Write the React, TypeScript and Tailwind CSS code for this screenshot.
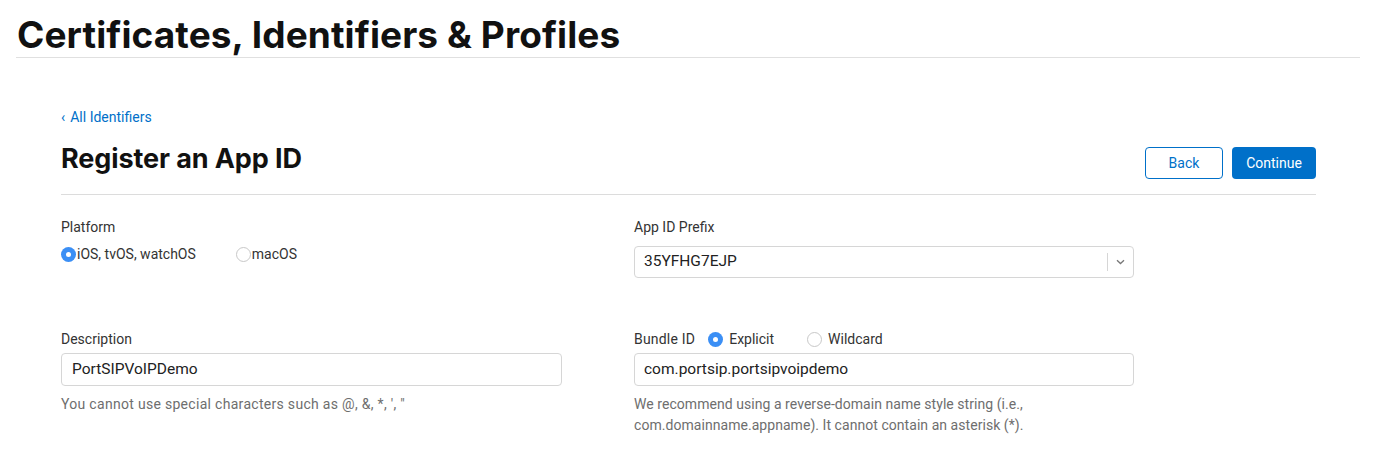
import React from "react";

const font = { fontFamily: "Roboto, 'Noto Sans', sans-serif" };
const headFont = { fontFamily: "Inter, 'Noto Sans', sans-serif" };

function Radio({ checked, label, className = "", gap = "ml-[1px]" }: { checked: boolean; label: string; className?: string; gap?: string }) {
  return (
    <label className={`flex items-center ${className}`}>
      {checked ? (
        <span className="w-[15px] h-[15px] rounded-full bg-[#3b8ff5] flex items-center justify-center">
          <span className="w-[5px] h-[5px] rounded-full bg-white" />
        </span>
      ) : (
        <span className="w-[15px] h-[15px] rounded-full border border-[#c8c8c8] bg-white" />
      )}
      <span className={`text-[14px] text-[#333] ${gap}`}>{label}</span>
    </label>
  );
}

export default function App() {
  return (
    <div className="w-[1400px] h-[470px] bg-white overflow-hidden text-[#111]" style={font}>
      <div className="px-[16px] pt-[14px]">
        <h1 className="text-[37px] font-bold leading-[42px] tracking-[0.1px] text-[#111] pl-[1px]" style={headFont}>
          Certificates, Identifiers &amp; Profiles
        </h1>
        <div className="w-[1344px] h-px bg-[#e0e0e0] mt-[1px]" />
      </div>
      <div className="ml-[61px] w-[1255px]">
        <div className="mt-[50px] text-[14px] text-[#0070c9] leading-[18px] flex items-center">
          <span className="mr-[5px]">‹</span>All Identifiers
        </div>
        <div className="flex items-end justify-between mt-[15px] pb-[17px] border-b border-[#dcdcdc]">
          <h2 className="text-[27px] font-bold leading-[36px] tracking-[-0.1px] text-[#111]" style={headFont}>Register an App ID</h2>
          <div className="flex gap-[9px] -mb-[2px]">
            <button className="w-[78px] h-[32px] rounded-[4px] border border-[#0070c9] text-[#0070c9] text-[14px] bg-white">
              Back
            </button>
            <button className="w-[84px] h-[32px] rounded-[4px] bg-[#0070c9] text-white text-[14px]">
              Continue
            </button>
          </div>
        </div>

        <div className="flex mt-[23px]">
          <div className="w-[573px]">
            <div className="text-[14px] text-[#333] leading-[18px]">Platform</div>
            <div className="flex items-center mt-[8px]">
              <Radio checked label="iOS, tvOS, watchOS" />
              <Radio checked={false} label="macOS" className="ml-[40px]" />
            </div>
          </div>
          <div className="w-[500px]">
            <div className="text-[14px] text-[#333] leading-[18px]">App ID Prefix</div>
            <div className="mt-[10px] h-[32px] border border-[#d6d6d6] rounded-[4px] flex items-center">
              <span className="flex-1 pl-[9px] text-[15.5px] text-[#222]">35YFHG7EJP</span>
              <span className="w-px h-[18px] bg-[#d6d6d6]" />
              <span className="w-[25px] flex items-center justify-center">
                <svg width="9" height="6" viewBox="0 0 9 6">
                  <path d="M1 1.2 L4.5 4.5 L8 1.2" fill="none" stroke="#777" strokeWidth="1.3" />
                </svg>
              </span>
            </div>
          </div>
        </div>

        <div className="flex mt-[52px]">
          <div className="w-[573px]">
            <div className="text-[14px] text-[#333] leading-[18px]">Description</div>
            <div className="mt-[5px] w-[501px] h-[33px] border border-[#d6d6d6] rounded-[4px] flex items-center pl-[10px] text-[15.5px] text-[#222]">
              PortSIPVoIPDemo
            </div>
            <div className="mt-[8px] text-[14px] text-[#6e6e6e] leading-[21px] tracking-[0.3px]">
              You cannot use special characters such as @, &amp;, *, ', "
            </div>
          </div>
          <div className="w-[500px]">
            <div className="flex items-center leading-[18px]">
              <span className="text-[14px] text-[#333] tracking-[0.2px]">Bundle ID</span>
              <Radio checked label="Explicit" className="ml-[13px]" gap="ml-[6px]" />
              <Radio checked={false} label="Wildcard" className="ml-[33px]" gap="ml-[6px]" />
            </div>
            <div className="mt-[5px] h-[33px] border border-[#d6d6d6] rounded-[4px] flex items-center pl-[9px] text-[15.5px] text-[#222]">
              com.portsip.portsipvoipdemo
            </div>
            <div className="mt-[8px] text-[14px] text-[#6e6e6e] leading-[21px] tracking-[0.05px] w-[420px]">
              We recommend using a reverse-domain name style string (i.e., com.domainname.appname). It cannot contain an asterisk (*).
            </div>
          </div>
        </div>
      </div>
    </div>
  );
}
